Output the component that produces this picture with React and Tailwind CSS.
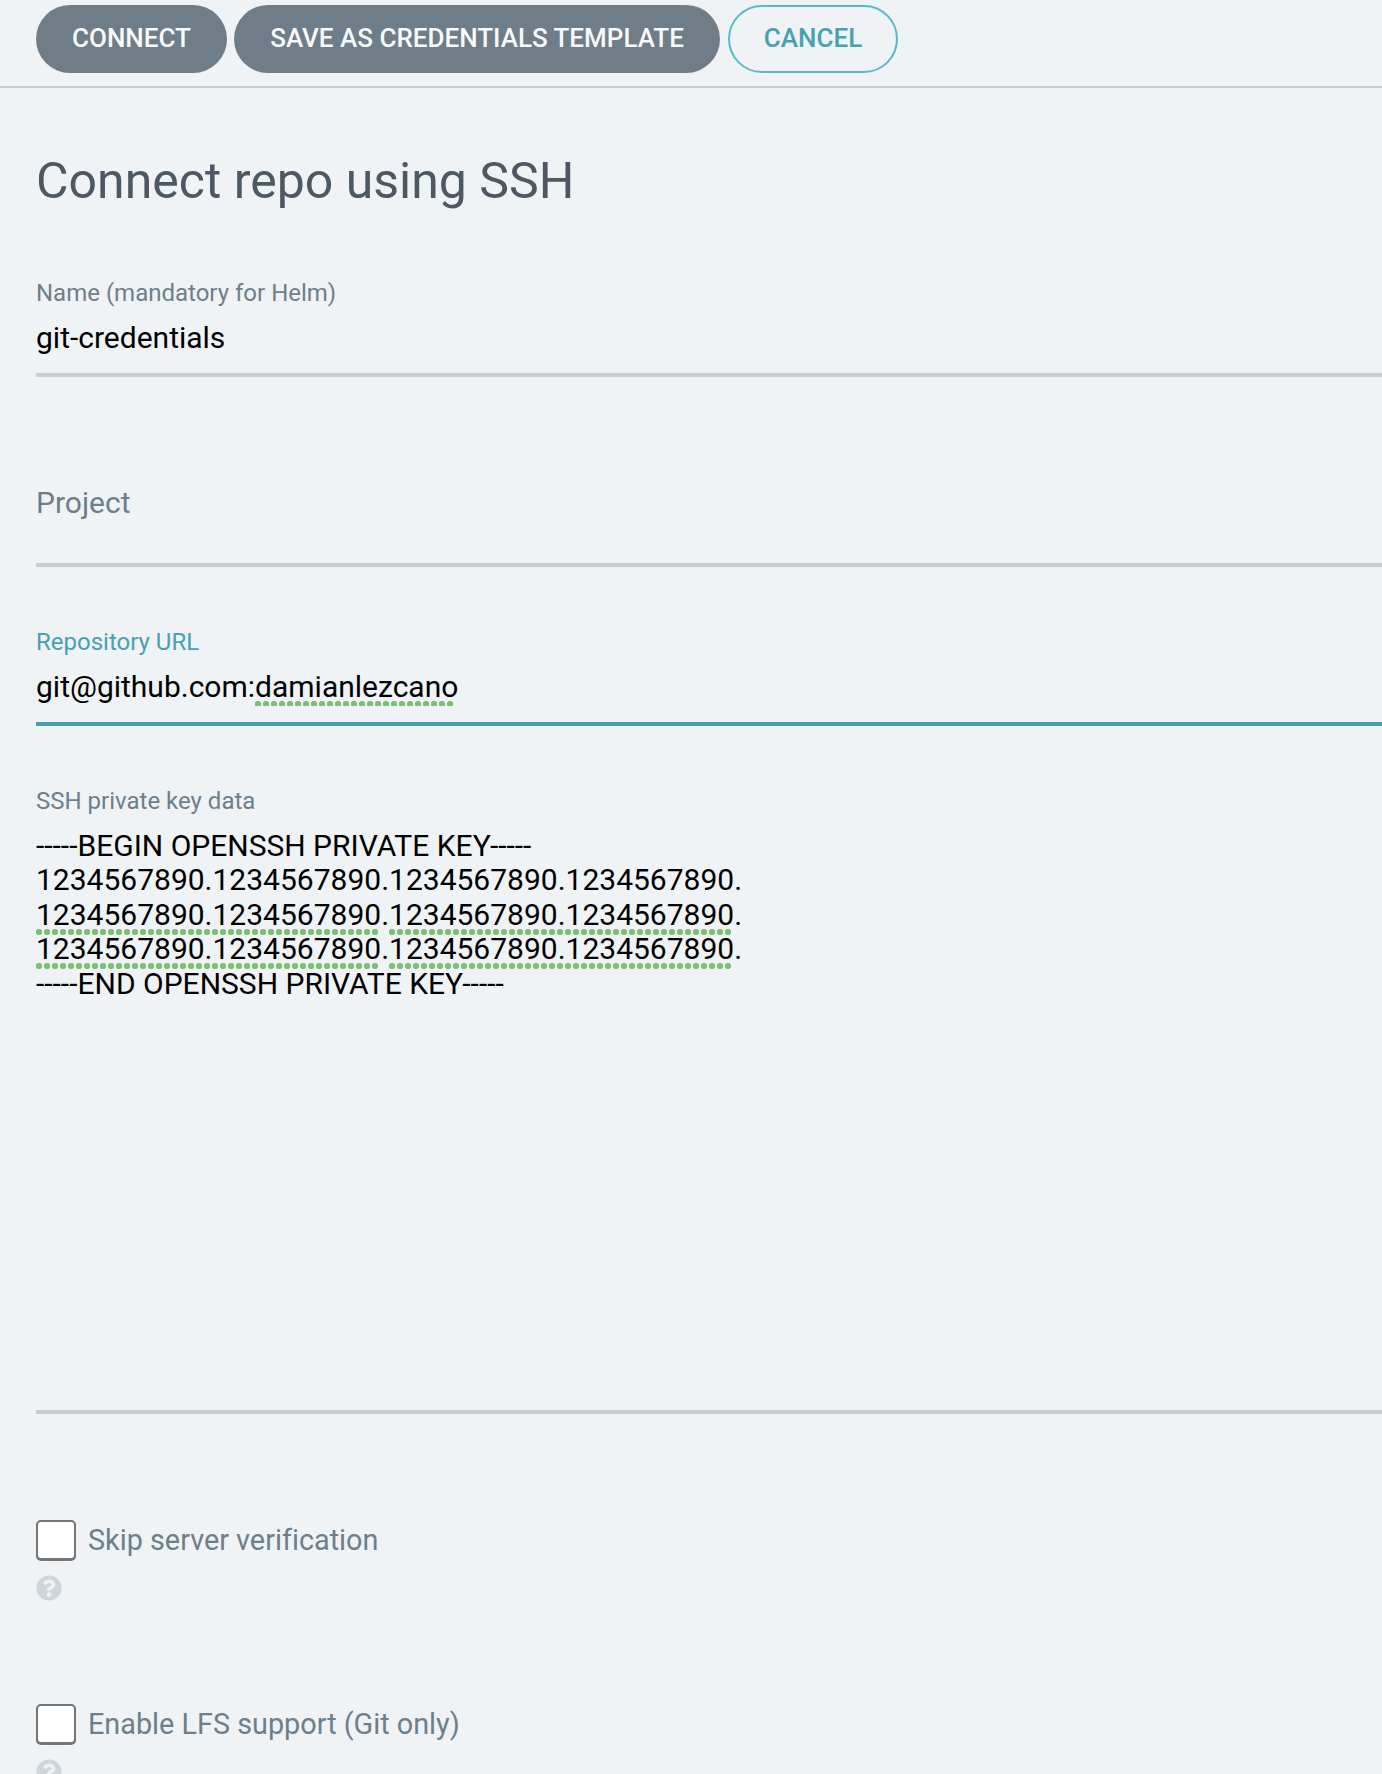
import React from "react";
import { FaQuestionCircle } from "react-icons/fa";

// A run of text the spell checker marks with a dotted green line.
function Marked({ children, dots }) {
  return (
    <span className="relative inline-block">
      {children}
      <span
        className={`absolute left-0 bg-[radial-gradient(circle_at_3px_3px,#7cc074_2.8px,transparent_3.6px)] bg-[length:8px_6px] bg-repeat-x ${dots}`}
      />
    </span>
  );
}

function Label({ className = "text-[#6d7f8b]", children }) {
  return <div className={`text-[24px] leading-[40px] ${className}`}>{children}</div>;
}

function CheckRow({ children }) {
  return (
    <div className="h-[184px]">
      <div className="flex h-10 items-center">
        <span className="h-10 w-10 shrink-0 rounded-[5px] border-2 border-[#767676] bg-white shadow-[0_1px_0_#767676]" />
        <span className="ml-3 text-[28.8px] leading-[40px] [font-variant-ligatures:none] text-[#6d7f8b]">{children}</span>
      </div>
      <FaQuestionCircle className="mt-[15px] h-[26px] w-[26px] text-[#ced5db]" />
    </div>
  );
}

const LONG = "1234567890.1234567890";

export default function App() {
  return (
    <div className="h-[1774px] w-[1382px] overflow-hidden bg-[#eff3f6] font-['Roboto',sans-serif] whitespace-nowrap">
      <header className="flex h-[88px] items-start border-b-2 border-[#c8cfd4] pt-[5px] pl-9 text-[26px] font-medium">
        <button className="h-[68px] w-[191px] rounded-[34px] bg-[#6f7d88] pb-[2px] leading-[66px] text-[#f8f9fa]">CONNECT</button>
        <button className="ml-[7px] h-[68px] w-[486px] rounded-[34px] bg-[#6f7d88] pb-[2px] leading-[66px] text-[#f8f9fa]">
          SAVE AS CREDENTIALS TEMPLATE
        </button>
        <button className="ml-2 h-[68px] w-[170px] rounded-[34px] border-2 border-[#56bacd] pb-[2px] leading-[62px] text-[#47a1b0]">
          CANCEL
        </button>
      </header>

      <main className="pl-9">
        <h1 className="pt-[63px] text-[50px] leading-[60px] text-[#4d5862]">Connect repo using SSH</h1>

        <div className="mt-[62px] h-[104px] border-b-4 border-[#cccccc]">
          <Label>Name (mandatory for Helm)</Label>
          <div className="mt-[5px] text-[30px] leading-[40px] text-black">git-credentials</div>
        </div>

        <div className="mt-[106px] h-[84px] border-b-4 border-[#cccccc] text-[30px] leading-[40px] text-[#6d7f8b]">
          Project
        </div>

        <div className="mt-[55px] h-[104px] border-b-4 border-[#47a1b0]">
          <Label className="text-[#47a1b0]">Repository URL</Label>
          <div className="mt-[5px] text-[30px] leading-[40px] text-black">
            git@github.com:
            <Marked dots="top-[34px] h-[5px] w-[198px]">damianlezcano</Marked>
          </div>
        </div>

        <div className="mt-[55px] h-[633px] border-b-4 border-[#cccccc]">
          <Label>SSH private key data</Label>
          <div className="mt-[7.5px] text-[30px] leading-[34.5px] text-black">
            <div>-----BEGIN OPENSSH PRIVATE KEY-----</div>
            <div>{LONG}.{LONG}.</div>
            {[0, 1].map((n) => (
              <div key={n} className="h-[34.5px]">
                <Marked dots="top-[31px] h-[6px] w-[342px]">{LONG}</Marked>.
                <Marked dots="top-[31px] h-[6px] w-[342px]">{LONG}</Marked>.
              </div>
            ))}
            <div>-----END OPENSSH PRIVATE KEY-----</div>
          </div>
        </div>

        <div className="mt-[106px]">
          <CheckRow>Skip server verification</CheckRow>
          <CheckRow>Enable LFS support (Git only)</CheckRow>
        </div>
      </main>
    </div>
  );
}
